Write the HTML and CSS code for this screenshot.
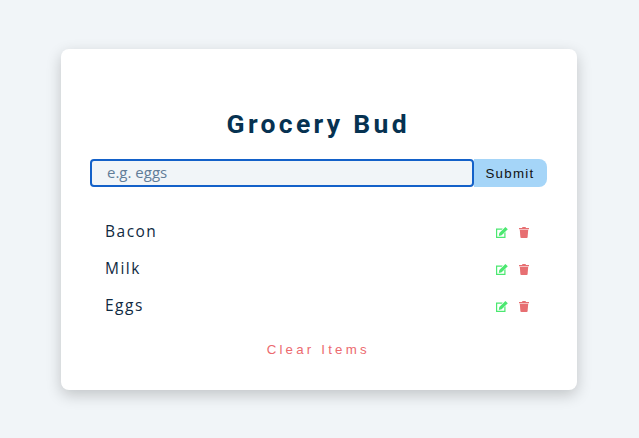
FILE: index.html
```html
<!DOCTYPE html>
<html lang="en">
<head>
  <meta charset="UTF-8" />
  <meta name="viewport" content="width=device-width, initial-scale=1.0"/>
  <title>Grocery Bud</title>
  <link rel="stylesheet" href="styles.css">
</head>
<body>
  <section class="card">
    <h3 class="title">Grocery Bud</h3>

    <form class="grocery-form">
      <input type="text" class="grocery-input" placeholder="e.g. eggs" />
      <button type="button" class="submit-btn">Submit</button>
    </form>

    <div class="grocery-list">
      <article class="grocery-item">
        <p class="item-name">Bacon</p>
        <div class="btn-row">
          <svg class="icon edit" viewBox="0 0 12 11"><path d="M0 1.500h6.800L5.700 2.700H1.200v7.100h7.100V6.300l1.200-1.200V11H0z"/><path d="M3.300 6 9.400 0 11.800 2.300 5.700 8.300l-2.900.6z"/></svg>
          <svg class="icon trash" viewBox="0 0 10 11"><path d="M3.500 0h3l.5 1h3v1.200H0V1h3z"/><path d="M.8 2.800h8.400l-.6 7.400q-.1.800-.9.800H2.300q-.8 0-.9-.8z"/></svg>
        </div>
      </article>
      <article class="grocery-item">
        <p class="item-name">Milk</p>
        <div class="btn-row">
          <svg class="icon edit" viewBox="0 0 12 11"><path d="M0 1.500h6.800L5.700 2.700H1.200v7.100h7.100V6.300l1.200-1.200V11H0z"/><path d="M3.300 6 9.400 0 11.800 2.300 5.700 8.300l-2.900.6z"/></svg>
          <svg class="icon trash" viewBox="0 0 10 11"><path d="M3.500 0h3l.5 1h3v1.200H0V1h3z"/><path d="M.8 2.800h8.400l-.6 7.400q-.1.800-.9.800H2.300q-.8 0-.9-.8z"/></svg>
        </div>
      </article>
      <article class="grocery-item">
        <p class="item-name">Eggs</p>
        <div class="btn-row">
          <svg class="icon edit" viewBox="0 0 12 11"><path d="M0 1.500h6.800L5.700 2.700H1.200v7.100h7.100V6.300l1.200-1.200V11H0z"/><path d="M3.300 6 9.400 0 11.800 2.300 5.700 8.300l-2.900.6z"/></svg>
          <svg class="icon trash" viewBox="0 0 10 11"><path d="M3.500 0h3l.5 1h3v1.200H0V1h3z"/><path d="M.8 2.800h8.400l-.6 7.400q-.1.800-.9.800H2.300q-.8 0-.9-.8z"/></svg>
        </div>
      </article>
    </div>

    <button type="button" class="clear-btn">Clear Items</button>
  </section>
</body>
</html>
```

FILE: styles.css
```css
* {
  margin: 0;
  padding: 0;
  box-sizing: border-box;
}

body {
  font-family: 'Open Sans', sans-serif;
  background: #f1f5f8;
  color: #102a42;
  height: 438px;
  overflow: hidden;
  padding: 49px 62px 0 60.500px;
}

.card {
  width: 516px;
  height: 341px;
  background: #fff;
  border-radius: 8px;
  box-shadow: 0 5px 15px rgba(0, 0, 0, 0.2);
  padding: 56px 30px 0 29.500px;
}

.title {
  font-family: 'Roboto', sans-serif;
  font-size: 26.500px;
  line-height: 38px;
  font-weight: 700;
  letter-spacing: 3.300px;
  text-align: center;
  color: #063251;
  margin-bottom: 16px;
}

/* Form */
.grocery-form {
  display: flex;
  height: 28px;
}

.grocery-input {
  flex: 1;
  min-width: 0;
  padding: 0 0 2px 15px;
  font-family: 'Open Sans', sans-serif;
  font-size: 15px;
  background: #f1f5f8;
  border: 2px solid #1361c9;
  border-radius: 4px;
  outline: none;
}

.grocery-input::placeholder {
  color: #617d98;
  opacity: 1;
}

.submit-btn {
  width: 73px;
  background: #a5d5f8;
  border: none;
  border-radius: 0 8px 8px 0;
  font-family: 'Liberation Sans', sans-serif;
  font-size: 13.300px;
  letter-spacing: 1.300px;
  color: #111;
}

/* List */
.grocery-list {
  margin-top: 26px;
}

.grocery-item {
  display: flex;
  justify-content: space-between;
  align-items: center;
  height: 37px;
  padding: 0 18px 0 15px;
}

.item-name {
  font-size: 15.500px;
  letter-spacing: 1.500px;
  color: #102a42;
  position: relative;
  top: -1px;
}

.btn-row {
  display: flex;
  align-items: center;
  gap: 11px;
  position: relative;
  top: 1px;
}

.icon {
  display: block;
  height: 11px;
}

.edit {
  width: 12px;
  fill: #4be870;
}

.trash {
  width: 10px;
  fill: #e76f72;
}

.clear-btn {
  display: block;
  margin: 18px auto 0;
  background: none;
  border: none;
  font-family: 'Liberation Sans', sans-serif;
  font-size: 13.300px;
  letter-spacing: 3.200px;
  color: #ec6a6f;
}
```
